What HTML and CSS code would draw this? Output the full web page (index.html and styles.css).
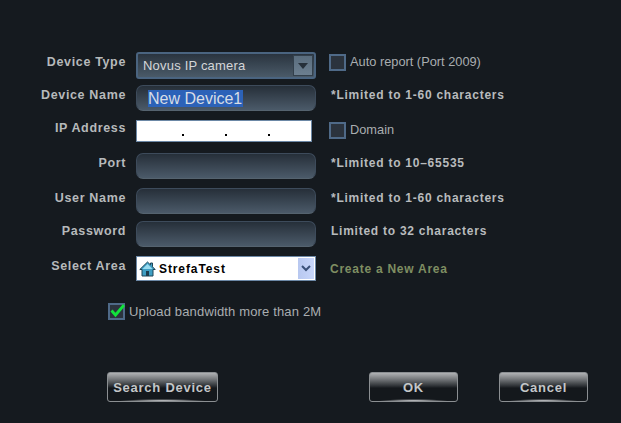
FILE: index.html
```html
<!DOCTYPE html>
<html lang="en">
<head>
<meta charset="utf-8">
<title>Device</title>
<link rel="stylesheet" href="styles.css">
</head>
<body>
<main class="dialog">
  <form class="form">
    <div class="label">Device Type</div>
    <div class="field field-select"><span>Novus IP camera</span>
      <span class="drop"><svg width="10" height="6" viewBox="0 0 10 6"><path d="M0 0H10L5 6Z" fill="#26303a"/></svg></span>
    </div>
    <label class="note check-note"><span class="box"></span><span class="thin">Auto report (Port 2009)</span></label>

    <div class="label">Device Name</div>
    <div class="field field-name"><span class="selected">New Device1</span></div>
    <div class="note">*Limited to 1-60 characters</div>

    <div class="label label-ip">IP Address</div>
    <div class="ip"><span class="dot"></span><span class="dot"></span><span class="dot"></span></div>
    <label class="note check-note"><span class="box"></span><span class="thin">Domain</span></label>

    <div class="label">Port</div>
    <div class="field"></div>
    <div class="note">*Limited to 10–65535</div>

    <div class="label">User Name</div>
    <div class="field"></div>
    <div class="note">*Limited to 1-60 characters</div>

    <div class="label">Password</div>
    <div class="field"></div>
    <div class="note">Limited to 32 characters</div>

    <div class="label">Select Area</div>
    <div class="area">
      <svg class="home" width="17" height="16" viewBox="0 0 17 16"><path d="M8.5 1L0.8 8.5H3V15H14V8.5H16.2L13.5 5.8V2H11.5V3.9Z" fill="#3f9fc4" stroke="#1f4557" stroke-width="1"/><path d="M8.5 3L3.5 8H13.5Z" fill="#9adcf0"/><rect x="7" y="10" width="3" height="5" fill="#1d3d4d"/></svg>
      <span class="area-name">StrefaTest</span>
      <span class="area-drop"><svg width="10" height="7" viewBox="0 0 10 7"><path d="M1 1L5 5L9 1" fill="none" stroke="#3a5078" stroke-width="2"/></svg></span>
    </div>
    <a class="note link">Create a New Area</a>
  </form>

  <label class="upload">
    <span class="box"><svg class="tick" width="17" height="15" viewBox="0 0 17 15"><path d="M2.5 7.5L6.5 12L15 2" fill="none" stroke="#12e33c" stroke-width="2.8"/></svg></span>
    <span class="thin">Upload bandwidth more than 2M</span>
  </label>

  <div class="actions">
    <button class="btn btn-search" type="button">Search Device</button>
    <div class="actions-right">
      <button class="btn" type="button">OK</button>
      <button class="btn" type="button">Cancel</button>
    </div>
  </div>
</main>
</body>
</html>
```
FILE: styles.css
```css
* { box-sizing: border-box; }
html, body { margin: 0; height: 100%; }
body {
  background: #151a1f;
  font-family: "Liberation Sans", Arial, sans-serif;
  font-size: 12px;
  color: #b8bbbd;
  overflow: hidden;
}
.dialog { width: 621px; height: 423px; padding-top: 52px; }
.form {
  display: grid;
  grid-template-columns: 126px 180px 1fr;
  column-gap: 10px;
  grid-template-rows: 33px 35px 33px 35px 33px 35px 33px;
  padding-right: 10px;
}
.label {
  font-weight: 700;
  font-size: 12.5px;
  letter-spacing: 0.65px;
  line-height: 20px;
  text-align: right;
  align-self: start;
  color: #b6b9bb;
}
.label-ip { margin-top: -2px; }
.field {
  width: 180px;
  height: 26px;
  border-radius: 7px;
  border: 1px solid #3d4b5b;
  border-bottom-color: #55636f;
  background: linear-gradient(#262f39, #4b5a69);
  display: flex;
  align-items: center;
}
.field-select {
  height: 27px;
  border-radius: 3px;
  border: 2px solid #4a6480;
  padding-left: 5px;
  justify-content: space-between;
  color: #d4d6d8;
  font-size: 13px;
  letter-spacing: 0.2px;
  background: linear-gradient(#2a343f, #4a5a68);
}
.drop {
  width: 20px;
  height: 21px;
  margin-right: 1px;
  background: linear-gradient(#5a6d7e, #6c7f90);
  border: 1px solid #33404c;
  display: flex;
  align-items: center;
  justify-content: center;
}
.field-name { padding-left: 11px; font-size: 16px; color: #d7dde6; }
.selected { background: #2c62b8; line-height: 17px; display: block; padding-right: 1px; }
.ip {
  width: 176px;
  height: 22px;
  background: #fff;
  border: 1px solid #6c88a6;
  display: flex;
  align-items: flex-end;
  padding: 0 0 5px 45px;
  gap: 41px;
}
.dot { width: 2px; height: 2px; background: #000; }
.note {
  font-weight: 700;
  letter-spacing: 0.75px;
  line-height: 20px;
  align-self: start;
  margin-left: 5px;
  color: #b8bbbd;
  white-space: nowrap;
}
.check-note {
  display: flex;
  align-items: center;
  gap: 4px;
  margin-left: 3px;
  font-weight: 400;
  letter-spacing: 0;
}
.box {
  width: 17px;
  height: 17px;
  flex: none;
  border: 2px solid #4f6a88;
  background: #2b333d;
  position: relative;
  display: block;
}
.thin { font-weight: 400; font-size: 12.8px; color: #a9adb0; }
.area {
  width: 180px;
  height: 25px;
  background: #fff;
  border: 1px solid #6c88a6;
  display: flex;
  align-items: center;
  padding: 0 1px 0 2px;
  gap: 3px;
  color: #000;
}
.area-name { font-weight: 700; letter-spacing: 0.9px; flex: 1; }
.area-drop {
  width: 16px;
  height: 21px;
  background: linear-gradient(90deg, #b8c8f0, #c8d6fa);
  display: flex;
  align-items: center;
  justify-content: center;
}
.link { color: #7f8e62; margin-left: 4px; margin-top: 3px; }
.upload {
  display: flex;
  align-items: center;
  gap: 4px;
  margin: 14px 0 0 108px;
  height: 17px;
}
.upload .thin { font-size: 13px; letter-spacing: 0.15px; }
.tick { position: absolute; left: -1px; top: -2px; }
.actions {
  display: flex;
  justify-content: space-between;
  margin: 52px 33px 0 107px;
}
.actions-right { display: flex; gap: 41px; }
.btn {
  width: 89px;
  height: 30px;
  padding: 0;
  border: 1px solid #8b8f92;
  border-radius: 3px;
  font: 700 13px/1 "Liberation Sans", Arial, sans-serif;
  letter-spacing: 0.75px;
  color: #c4c7c9;
  background:
    radial-gradient(ellipse 40% 2px at 50% 100%, #e2e4e6, transparent),
    linear-gradient(#b0b2b4 0, #75787b 22%, #2e3236 46%, #14181c 54%, #14181c 100%);
}
.btn-search { width: 111px; }
```
